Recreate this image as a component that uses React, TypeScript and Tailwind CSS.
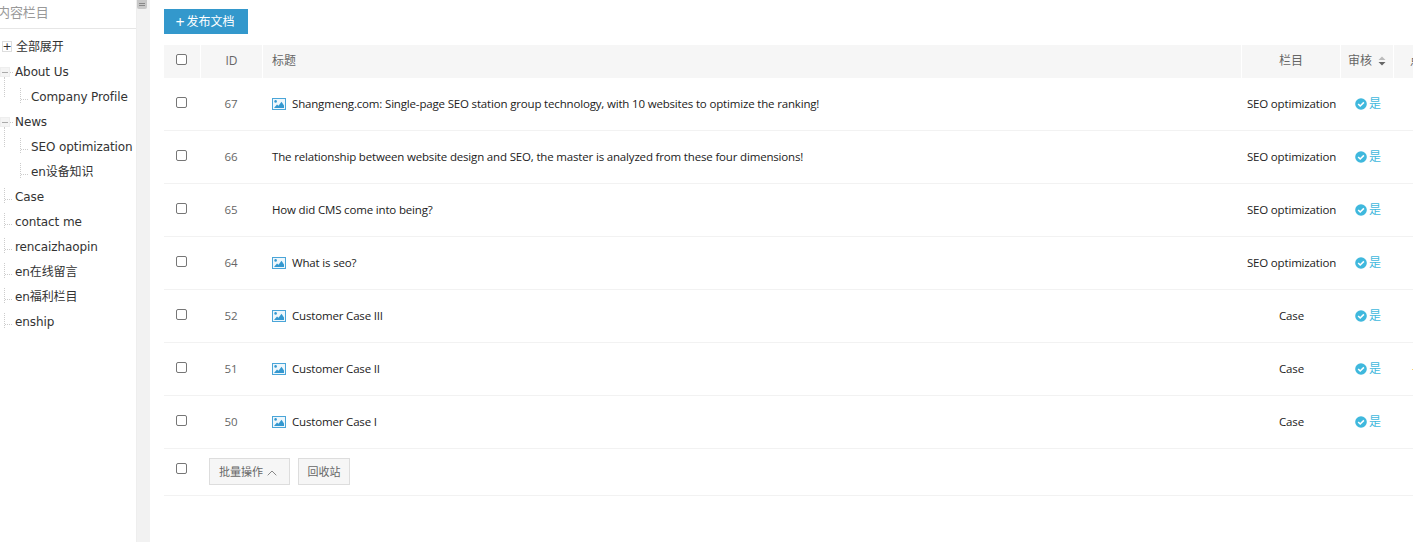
import React from "react";

const FONT = '"Open Sans", "Noto Sans CJK SC", sans-serif';

interface Row {
  id: number;
  title: string;
  column: string;
  image: boolean;
  flag?: boolean;
}

const rows: Row[] = [
  { id: 67, title: "Shangmeng.com: Single-page SEO station group technology, with 10 websites to optimize the ranking!", column: "SEO optimization", image: true },
  { id: 66, title: "The relationship between website design and SEO, the master is analyzed from these four dimensions!", column: "SEO optimization", image: false },
  { id: 65, title: "How did CMS come into being?", column: "SEO optimization", image: false },
  { id: 64, title: "What is seo?", column: "SEO optimization", image: true },
  { id: 52, title: "Customer Case III", column: "Case", image: true },
  { id: 51, title: "Customer Case II", column: "Case", image: true, flag: true },
  { id: 50, title: "Customer Case I", column: "Case", image: true },
];

const ImageIcon = () => (
  <svg width="14" height="12" viewBox="0 0 14 12" className="shrink-0">
    <rect x="0.5" y="0.5" width="13" height="11" fill="#eef7fc" stroke="#4aa5d8" />
    <circle cx="3.6" cy="3.4" r="1.3" fill="#3498d0" />
    <path d="M2 10 L5 6.5 L6.5 7.8 L9.5 3.8 L12 7.5 V10 Z" fill="#3498d0" />
  </svg>
);

const CheckBadge = () => (
  <svg width="12" height="12" viewBox="0 0 12 12" className="shrink-0">
    <circle cx="6" cy="6" r="5.8" fill="#3fb8dd" />
    <path d="M3.2 6 L5.2 8 L8.9 4.4" fill="none" stroke="#fff" strokeWidth="1.6" />
  </svg>
);

const Checkbox = () => (
  <span className="block w-[11px] h-[11px] rounded-[2px] border border-[#767676] bg-white" />
);

const TreeLeaf = ({ label, depth }: { label: string; depth: 0 | 1 }) => (
  <div className={`relative h-[25px] leading-[25px] whitespace-nowrap ${depth ? "pl-[31px]" : "pl-[15px]"}`}>
    <span className={`absolute top-[3px] h-[15px] border-l border-dotted border-[#cccccc] ${depth ? "left-[20px]" : "left-[4px]"}`} />
    <span className={`absolute top-[14px] w-[7px] border-t border-dotted border-[#cccccc] ${depth ? "left-[21px]" : "left-[5px]"}`} />
    {label}
  </div>
);

const TreeFolder = ({ label }: { label: string }) => (
  <div className="relative h-[25px] leading-[25px] pl-[15px] whitespace-nowrap">
    <span className="absolute left-0 top-[7px] w-[10px] h-[10px] border border-[#eeeeee] bg-[#f4f4f4] flex items-center justify-center">
      <span className="block w-[6px] h-px bg-[#aaaaaa]" />
    </span>
    <span className="absolute left-[4px] top-[17px] h-[20px] border-l border-dotted border-[#cccccc]" />
    <span className="absolute left-[10px] top-[12px] w-[3px] border-t border-dotted border-[#cccccc]" />
    {label}
  </div>
);

const Sidebar = () => (
  <aside className="w-[137px] shrink-0 bg-white border-r border-[#eeeeee] text-[12px] tracking-[-0.1px] text-[#333333]" style={{ fontFamily: '"DejaVu Sans", "Noto Sans CJK SC", sans-serif' }}>
    <div className="h-[29px] leading-[26px] border-b border-[#e6e6e6] indent-[-3px] text-[13px] text-[#999999] whitespace-nowrap">内容栏目</div>
    <div className="pt-[6px]">
      <div className="relative h-[25px] leading-[25px] pl-[16px] whitespace-nowrap">
        <span className="absolute left-[2px] top-[6px] w-[10px] h-[11px] border border-[#dddddd] flex items-center justify-center text-[11px] leading-none text-[#333333]">+</span>
        全部展开
      </div>
      <TreeFolder label="About Us" />
      <TreeLeaf label="Company Profile" depth={1} />
      <TreeFolder label="News" />
      <TreeLeaf label="SEO optimization" depth={1} />
      <TreeLeaf label="en设备知识" depth={1} />
      <TreeLeaf label="Case" depth={0} />
      <TreeLeaf label="contact me" depth={0} />
      <TreeLeaf label="rencaizhaopin" depth={0} />
      <TreeLeaf label="en在线留言" depth={0} />
      <TreeLeaf label="en福利栏目" depth={0} />
      <TreeLeaf label="enship" depth={0} />
    </div>
  </aside>
);

const App = () => (
  <div className="flex w-[1413px] h-[542px] overflow-hidden bg-white text-[12px] text-[#333333]" style={{ fontFamily: FONT }}>
    <Sidebar />
    <div className="w-[13px] shrink-0 bg-[#f2f2f2]">
      <div className="w-[10px] h-[9px] bg-[#c8c8c8] rounded-b-[2px] flex flex-col items-center justify-center gap-[1px]">
        <span className="block w-[6px] h-px bg-[#888888]" />
        <span className="block w-[6px] h-px bg-[#888888]" />
      </div>
    </div>
    <main className="flex-1 min-w-0 pl-[14px] pt-[9px]">
      <button className="flex items-center justify-center gap-[2px] pr-[2px] w-[84px] h-[25px] bg-[#3398cc] text-white text-[12px]">
        <span className="text-[16px] leading-none">+</span>发布文档
      </button>
      <table className="mt-[11px] table-fixed border-separate border-spacing-0 w-[1260px]">
        <colgroup>
          <col className="w-[37px]" />
          <col className="w-[62px]" />
          <col className="w-[979px]" />
          <col className="w-[99px]" />
          <col className="w-[53px]" />
          <col className="w-[30px]" />
        </colgroup>
        <thead>
          <tr className="h-[33px] bg-[#f6f6f6] text-[#666666]">
            <th className="font-normal border-r border-white">
              <span className="flex justify-center -mt-[4px] -ml-[2px]"><Checkbox /></span>
            </th>
            <th className="font-normal border-r border-white text-center pb-[2px]">ID</th>
            <th className="font-normal border-r border-white text-left pl-[9px] pb-[2px]">标题</th>
            <th className="font-normal border-r border-white text-center pb-[2px]">栏目</th>
            <th className="font-normal border-r border-white text-left pl-[7px] pb-[2px]">
              <span className="inline-flex items-center gap-[6px]">
                审核
                <svg width="8" height="10" viewBox="0 0 8 10">
                  <path d="M4 0.5 L7.5 4 H0.5 Z" fill="#bbbbbb" />
                  <path d="M4 9.5 L7.5 6 H0.5 Z" fill="#666666" />
                </svg>
              </span>
            </th>
            <th className="font-normal text-left pl-[16px] pb-[2px] whitespace-nowrap">点击</th>
          </tr>
        </thead>
        <tbody>
          {rows.map((row) => (
            <tr key={row.id} className="h-[53px]">
              <td className="border-b border-[#f2f2f2]">
                <span className="flex justify-center -mt-[4px] -ml-[2px]"><Checkbox /></span>
              </td>
              <td className="border-b border-[#f2f2f2] text-center text-[#666666] text-[11.5px] pr-[2px]">{row.id}</td>
              <td className="border-b border-[#f2f2f2] pl-[9px]">
                <span className="flex items-center gap-[6px] whitespace-nowrap text-[11.5px] tracking-[-0.17px] text-[#222222]">
                  {row.image && <ImageIcon />}
                  {row.title}
                </span>
              </td>
              <td className="border-b border-[#f2f2f2] text-center whitespace-nowrap text-[11.5px] tracking-[-0.17px] text-[#222222]">{row.column}</td>
              <td className="border-b border-[#f2f2f2] pl-[14px]">
                <span className="flex items-center gap-[2px] text-[#3fb8dd]">
                  <CheckBadge />
                  是
                </span>
              </td>
              <td className="border-b border-[#f2f2f2] pl-[18px] text-[#f0ad4e]">{row.flag ? "-" : ""}</td>
            </tr>
          ))}
          <tr className="h-[47px]">
            <td className="border-b border-[#f2f2f2]">
              <span className="flex justify-center -mt-[8px] -ml-[2px]"><Checkbox /></span>
            </td>
            <td colSpan={5} className="border-b border-[#f2f2f2] pl-[8px]">
              <div className="flex items-center gap-[8px] -mt-[1px] text-[11px]">
                <button className="h-[27px] w-[81px] pt-[2px] pr-[3px] border border-[#dddddd] bg-[#f6f6f6] text-[#666666] flex items-center justify-center gap-[4px]">
                  批量操作
                  <svg width="10" height="6" viewBox="0 0 10 6">
                    <path d="M0.7 5.3 L5 1 L9.3 5.3" fill="none" stroke="#888888" />
                  </svg>
                </button>
                <button className="h-[27px] w-[52px] pt-[2px] border border-[#dddddd] bg-[#f6f6f6] text-[#666666]">回收站</button>
              </div>
            </td>
          </tr>
        </tbody>
      </table>
    </main>
  </div>
);

export default App;
